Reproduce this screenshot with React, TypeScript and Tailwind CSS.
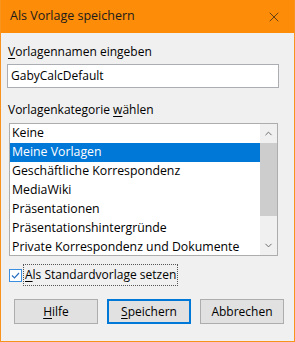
import { X, ChevronUp, ChevronDown } from "lucide-react";

const items = [
  "Keine",
  "Meine Vorlagen",
  "Geschäftliche Korrespondenz",
  "MediaWiki",
  "Präsentationen",
  "Präsentationshintergründe",
  "Private Korrespondenz und Dokumente",
];

export default function App() {
  const selected = 1;

  return (
    <div
      className="w-[295px] h-[342px] flex flex-col bg-[#f0f0f0] border-x border-b border-[#f7931e] text-[12px] text-black overflow-hidden"
      style={{ fontFamily: '"Open Sans", "Noto Sans", sans-serif' }}
    >
      {/* title bar */}
      <div className="h-[33px] shrink-0 bg-[#fd8c08] flex items-center justify-between pl-[9px] pr-[12px]">
        <span className="text-[12.5px] text-[#1b1b1b] leading-none">Als Vorlage speichern</span>
        <X size={16} strokeWidth={1} className="text-[#1b1b1b]" />
      </div>

      <div className="flex flex-col px-[6px]">
        <div className="mt-[11px] h-[16px] leading-[16px] pl-[1px]">
          <span className="underline underline-offset-2">V</span>orlagennamen eingeben
        </div>

        <div className="mt-[4px] h-[24px] w-[272px] bg-white border border-[#abadb3] flex items-center pl-[3px]">
          GabyCalcDefault
        </div>

        <div className="mt-[14px] h-[16px] leading-[16px] pl-[1px]">
          Vorlagenkategorie <span className="underline underline-offset-2">w</span>ählen
        </div>

        <div className="mt-[5px] ml-[2px] h-[133px] w-[269px] bg-white border border-[#adadad] flex overflow-hidden">
          <div className="flex-1 flex flex-col text-[12.3px]">
            {items.map((item, i) => (
              <div
                key={item}
                className={
                  "h-[19px] shrink-0 flex items-center pl-[2px] whitespace-nowrap " +
                  (i === selected ? "bg-[#0078d7] text-white" : "")
                }
              >
                {item}
              </div>
            ))}
          </div>
          <div className="w-[17px] flex flex-col bg-[#f0f0f0]">
            <div className="h-[19px] flex items-center justify-center text-[#606060]">
              <ChevronUp size={11} strokeWidth={2} />
            </div>
            <div className="h-[73px] bg-[#cdcdcd]" />
            <div className="flex-1" />
            <div className="h-[19px] flex items-center justify-center text-[#606060]">
              <ChevronDown size={11} strokeWidth={2} />
            </div>
          </div>
        </div>

        <div className="mt-[8px] h-[22px] flex items-center">
          <div className="ml-[2px] w-[13px] h-[13px] border border-[#3c8ee0] bg-white flex items-center justify-center">
            <svg width="11" height="11" viewBox="0 0 11 11">
              <path d="M2 5.5 L4.5 8 L9 3" fill="none" stroke="#2b6fc1" strokeWidth="1.2" />
            </svg>
          </div>
          <div className="ml-[1px] h-[22px] px-[1px] flex items-center border border-dotted border-[#555]">
            <span className="underline underline-offset-2">A</span>ls Standardvorlage setzen
          </div>
        </div>

        <div className="mt-[13px] flex gap-[9px] pl-[7px]">
          <button className="w-[84px] h-[25px] bg-[#e1e1e1] border border-[#adadad]">
            <span className="underline underline-offset-2">H</span>ilfe
          </button>
          <button className="w-[84px] h-[25px] bg-[#e1e1e1] border-2 border-[#0078d7]">
            <span className="underline underline-offset-2">S</span>peichern
          </button>
          <button className="w-[84px] h-[25px] bg-[#e1e1e1] border border-[#adadad]">
            Abbrechen
          </button>
        </div>
      </div>
    </div>
  );
}
